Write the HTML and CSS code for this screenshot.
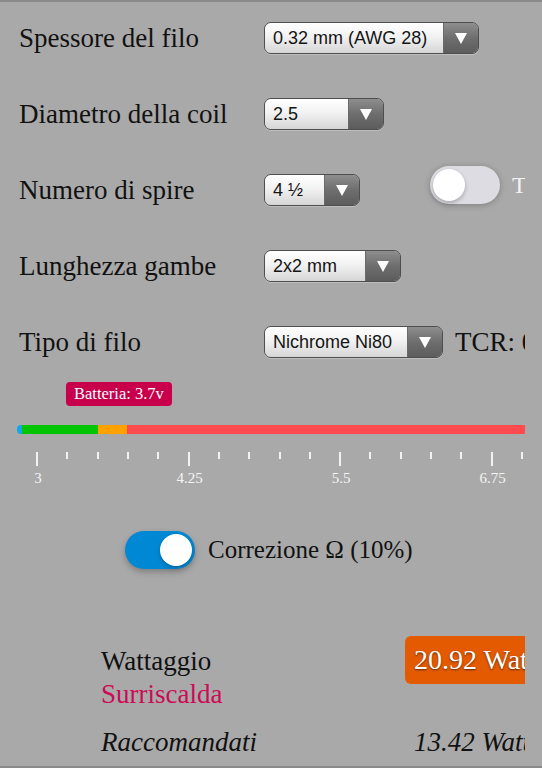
FILE: index.html
```html
<!DOCTYPE html>
<html lang="it">
<head>
<meta charset="UTF-8" />
<meta name="viewport" content="width=device-width, initial-scale=1" />
<title>Calcolatore Coil</title>
<link rel="stylesheet" href="styles.css">
</head>
<body>
  <div class="page">
    <div class="form">
      <div class="row">
        <div class="label">Spessore del filo</div>
        <div class="select w1"><span class="value">0.32 mm (AWG 28)</span><span class="arrow"></span></div>
      </div>
      <div class="row">
        <div class="label">Diametro della coil</div>
        <div class="select w2"><span class="value">2.5</span><span class="arrow"></span></div>
      </div>
      <div class="row">
        <div class="label">Numero di spire</div>
        <div class="select w3"><span class="value">4 ½</span><span class="arrow"></span></div>
        <div class="toggle off"><span class="knob"></span></div>
        <span class="toggle-text">T</span>
      </div>
      <div class="row">
        <div class="label">Lunghezza gambe</div>
        <div class="select w4"><span class="value">2x2 mm</span><span class="arrow"></span></div>
      </div>
      <div class="row">
        <div class="label">Tipo di filo</div>
        <div class="select w5"><span class="value">Nichrome Ni80</span><span class="arrow"></span></div>
        <span class="tcr">TCR: 0.00011</span>
      </div>
    </div>

    <div class="battery">
      <div class="badge">Batteria: 3.7v</div>
      <div class="bar">
        <span class="seg blue"></span>
        <span class="seg green"></span>
        <span class="seg orange"></span>
        <span class="seg red"></span>
      </div>
      <div class="ticks">
        <span class="tick major"></span><span class="tick"></span><span class="tick"></span><span class="tick"></span><span class="tick"></span>
        <span class="tick major"></span><span class="tick"></span><span class="tick"></span><span class="tick"></span><span class="tick"></span>
        <span class="tick major"></span><span class="tick"></span><span class="tick"></span><span class="tick"></span><span class="tick"></span>
        <span class="tick major"></span><span class="tick"></span>
      </div>
      <div class="tick-labels">
        <span>3</span><span>4.25</span><span>5.5</span><span>6.75</span>
      </div>
    </div>

    <div class="correction">
      <div class="toggle on"><span class="knob"></span></div>
      <span class="correction-text">Correzione Ω (10%)</span>
    </div>

    <div class="result">
      <div class="result-left">
        <div class="watt-label">Wattaggio</div>
        <div class="warning">Surriscalda</div>
      </div>
      <div class="watt-box">20.92 Watt</div>
      <div class="rec-label">Raccomandati</div>
      <div class="rec-value">13.42 Watt</div>
    </div>
  </div>
</body>
</html>
```

FILE: styles.css
```css
:root {
  --bg: #a9a9a9;
  --line: #8a8a8a;
  --crimson: #c8004b;
  --toggle-blue: #0088d4;
  --watt-orange: #e35a00;
}

* {
  box-sizing: border-box;
}

body {
  margin: 0;
  height: 768px;
  background-color: var(--bg);
  border-top: 2px solid var(--line);
  border-bottom: 2px solid var(--line);
  font-family: 'Liberation Serif', 'Times New Roman', serif;
  color: #111;
}

.page {
  width: 525px;
  height: 764px;
  overflow: hidden;
}

.form {
  margin-top: -2px;
  padding-left: 19px;
}

.row {
  display: flex;
  align-items: center;
  height: 76px;
  white-space: nowrap;
}

.label {
  width: 245px;
  flex-shrink: 0;
  font-size: 27px;
}

.select {
  display: flex;
  flex-shrink: 0;
  height: 32px;
  border: 1px solid #4e4e4e;
  border-radius: 7px;
  overflow: hidden;
  font-family: 'Liberation Sans', Arial, sans-serif;
  font-size: 18px;
  box-shadow: 0 1px 0 rgba(255,255,255,0.25);
}

.select .value {
  flex: 1;
  display: flex;
  align-items: center;
  padding-left: 8px;
  background: linear-gradient(#ffffff, #f2f2f2 45%, #d6d6d6);
  color: #151515;
}

.select .arrow {
  width: 35px;
  flex-shrink: 0;
  display: flex;
  align-items: center;
  justify-content: center;
  background: linear-gradient(#8e8e8e, #6e6e6e 50%, #5c5c5c);
  border-left: 1px solid #6a6a6a;
}

.select .arrow::after {
  content: '';
  width: 0;
  height: 0;
  border-left: 6px solid transparent;
  border-right: 6px solid transparent;
  border-top: 11px solid #fff;
}

.w1 { width: 215px; }
.w2 { width: 120px; }
.w3 { width: 96px; }
.w4 { width: 137px; }
.w5 { width: 179px; }

.toggle {
  width: 70px;
  height: 38px;
  border-radius: 19px;
  padding: 3px;
  display: flex;
  flex-shrink: 0;
}

.toggle .knob {
  width: 32px;
  height: 32px;
  border-radius: 50%;
  background: #fff;
  box-shadow: 0 2px 4px rgba(0,0,0,0.25);
}

.toggle.off {
  margin-left: 70px;
  margin-top: -10px;
  background: #dcdce2;
  box-shadow: 0 1px 6px rgba(0,0,0,0.25);
}

.toggle.on {
  background: var(--toggle-blue);
  justify-content: flex-end;
  box-shadow: 0 3px 6px rgba(0,0,0,0.25);
}

.toggle-text {
  margin-left: 12px;
  margin-top: -10px;
  font-size: 24px;
  color: #f2f2f2;
}

.tcr {
  margin-left: 12px;
  font-size: 27px;
}

.battery {
  padding-top: 2px;
}

.badge {
  display: inline-block;
  margin-left: 66px;
  height: 24px;
  padding: 0 8px;
  line-height: 24px;
  border-radius: 4px;
  background: var(--crimson);
  color: #fff;
  font-size: 16.5px;
}

.bar {
  display: flex;
  margin: 19px 0 0 17px;
  height: 9px;
}

.seg {
  height: 100%;
}

.blue {
  width: 5px;
  background: #10a8e8;
  border-radius: 4px 0 0 4px;
}

.green {
  width: 76px;
  background: #00c400;
}

.orange {
  width: 29px;
  background: #ffa200;
}

.red {
  flex: 1;
  background: #ff4a50;
}

.ticks {
  display: flex;
  justify-content: space-between;
  align-items: flex-start;
  width: 487px;
  margin: 18px 0 0 36px;
}

.tick {
  width: 2px;
  height: 7px;
  background: #f2f2f2;
}

.tick.major {
  height: 14px;
}

.tick-labels {
  display: flex;
  gap: 91.5px;
  margin: 4px 0 0 8px;
}

.tick-labels span {
  width: 60px;
  text-align: center;
  font-size: 15px;
  color: #f4f4f4;
}

.correction {
  display: flex;
  align-items: center;
  gap: 13px;
  margin: 44px 0 0 125px;
}

.correction-text {
  font-size: 25px;
}

.result {
  display: grid;
  grid-template-columns: 304px 1fr;
  margin: 67px 0 0 101px;
  white-space: nowrap;
}

.result-left {
  padding-top: 9px;
  font-size: 27px;
  line-height: 33px;
}

.warning {
  color: #cc0a55;
}

.watt-box {
  height: 48px;
  padding-left: 9px;
  line-height: 48px;
  border-radius: 6px 0 0 6px;
  background: var(--watt-orange);
  color: #fff;
  font-size: 28px;
  text-shadow: 0 1px 2px rgba(0,0,0,0.6);
  overflow: hidden;
}

.rec-label,
.rec-value {
  margin-top: 15px;
  font-size: 27px;
  font-style: italic;
  line-height: 32px;
}

.rec-value {
  padding-left: 9px;
}
```
